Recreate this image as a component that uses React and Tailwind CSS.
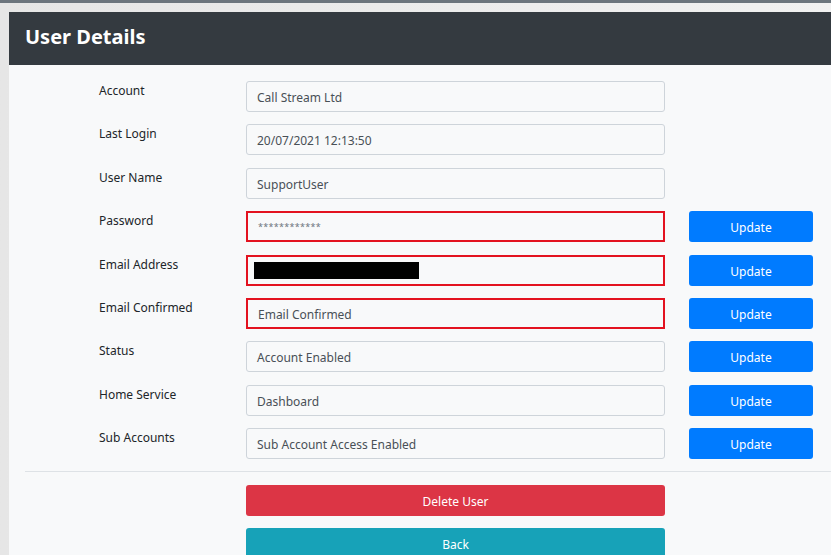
import React from "react";

const rows = [
  { label: "Account", value: "Call Stream Ltd" },
  { label: "Last Login", value: "20/07/2021 12:13:50" },
  { label: "User Name", value: "SupportUser" },
  { label: "Password", value: "************", invalid: true, update: true, small: true },
  { label: "Email Address", value: "", invalid: true, update: true, redacted: true },
  { label: "Email Confirmed", value: "Email Confirmed", invalid: true, update: true },
  { label: "Status", value: "Account Enabled", update: true },
  { label: "Home Service", value: "Dashboard", update: true },
  { label: "Sub Accounts", value: "Sub Account Access Enabled", update: true },
];

const Row = ({ row }) => (
  <div className="flex items-center h-[31px]">
    <div className="w-[147px] pl-[90px] box-content self-start mt-[1px] text-[12px] text-[#212529]">
      {row.label}
    </div>
    <div
      className={
        "w-[419px] h-[31px] flex items-center px-[10px] pt-[3px] text-[12px] text-[#495057] " +
        (row.invalid ? "border-2 border-[#e3121f] px-[9px]" : "border border-[#ced4da] rounded-[3px]")
      }
    >
      {row.redacted ? (
        <div className="w-[165px] h-[17px] bg-black -ml-[4px] -mt-[3px]" />
      ) : (
        <span className={row.small ? "text-[9px] text-[#6c757d] tracking-[0.3px] -mt-[3px]" : ""}>{row.value}</span>
      )}
    </div>
    {row.update && (
      <button className="ml-[24px] w-[124px] h-[31px] pt-[3px] rounded-[3px] bg-[#007bff] text-white text-[12px]">
        Update
      </button>
    )}
  </div>
);

export default function App() {
  return (
    <div
      className="w-[831px] h-[555px] overflow-hidden bg-[#ececec]"
      style={{ fontFamily: '"Noto Sans", "Open Sans", sans-serif' }}
    >
      <div className="h-[3px] bg-[#6c757d]" />
      <div className="pl-[9px] pt-[9px] bg-gradient-to-r from-[#e6e6e6] to-[#f1f1f1]">
        <div className="bg-[#f8f9fa]">
          <div className="h-[53px] bg-[#343a40] flex items-center pl-[16px]">
            <h1 className="text-white font-bold text-[20px] leading-none -mt-[3px]">User Details</h1>
          </div>
          <div className="pt-[16px] flex flex-col gap-[12.4px]">
            {rows.map((r) => (
              <Row key={r.label} row={r} />
            ))}
          </div>
          <div className="ml-[16px] mt-[12px] border-t border-[#dee2e6]" />
          <div className="pl-[237px] pt-[13px] flex flex-col gap-[12px] pb-[20px]">
            <button className="w-[419px] h-[31px] pt-[3px] rounded-[3px] bg-[#dc3545] text-white text-[12px]">
              Delete User
            </button>
            <button className="w-[419px] h-[31px] pt-[3px] rounded-[3px] bg-[#17a2b8] text-white text-[12px]">
              Back
            </button>
          </div>
        </div>
      </div>
    </div>
  );
}
